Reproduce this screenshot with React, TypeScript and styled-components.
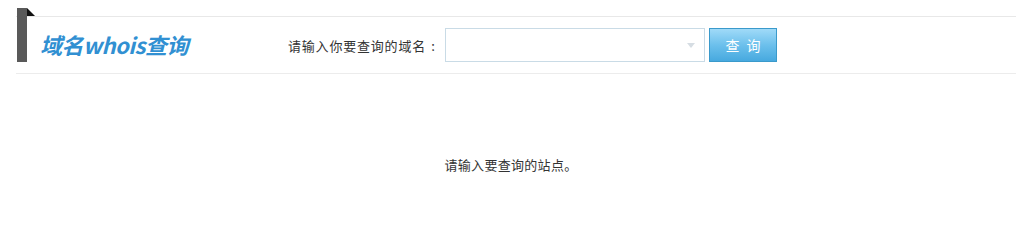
import styled, { createGlobalStyle } from "styled-components";

const GlobalStyle = createGlobalStyle`
  body {
    margin: 0;
    background: #fff;
    font-family: "Noto Sans CJK SC", "Noto Sans", "Liberation Sans", sans-serif;
    color: #333;
  }
`;

const Page = styled.div`
  padding-top: 16px;
`;

const Header = styled.div`
  margin: 0 6px 0 16px;
  height: 56px;
  border-top: 1px solid #e8e8e8;
  border-bottom: 1px solid #ececec;
  display: flex;
  align-items: center;
`;

const Ribbon = styled.div`
  position: relative;
  align-self: flex-start;
  margin-top: -9px;
  margin-left: 1px;
  width: 10px;
  height: 54px;
  background: #595959;
  flex-shrink: 0;
  &::after {
    content: "";
    position: absolute;
    top: 0;
    right: -8px;
    width: 0;
    height: 0;
    border-top: 8px solid transparent;
    border-left: 8px solid #111;
  }
`;

const Title = styled.h1`
  margin: 0 0 0 13px;
  width: 248px;
  font-size: 22px;
  font-weight: 700;
  font-style: italic;
  color: #3190d2;
  letter-spacing: -0.5px;
  line-height: 1;
  padding-bottom: 2px;
`;

const Form = styled.form`
  display: flex;
  align-items: center;
`;

const Label = styled.label`
  font-size: 13px;
  letter-spacing: 0.8px;
  color: #333;
  margin-right: 5px;
  white-space: nowrap;
`;

const Colon = styled.span`
  display: inline-block;
  width: 13px;
  text-align: center;
  margin-left: 1px;
`;

const SelectBox = styled.div`
  position: relative;
  width: 260px;
  height: 34px;
  box-sizing: border-box;
  border: 1px solid #c9dbe6;
  background: #fff;
`;

const Arrow = styled.span`
  position: absolute;
  right: 9px;
  top: 14px;
  width: 0;
  height: 0;
  border-left: 4px solid transparent;
  border-right: 4px solid transparent;
  border-top: 5px solid #d6dde3;
`;

const SearchButton = styled.button`
  margin-left: 4px;
  width: 68px;
  height: 34px;
  box-sizing: border-box;
  border: 1px solid #3a9acb;
  background: linear-gradient(to bottom, #a0daf8 0%, #6cc0ec 50%, #47a9df 100%);
  color: #fff;
  font-family: inherit;
  font-size: 14px;
  letter-spacing: 7px;
  padding: 0 0 0 7px;
  cursor: pointer;
`;

const Message = styled.p`
  margin: 0;
  padding-top: 82px;
  text-align: center;
  font-size: 13px;
  letter-spacing: 0.3px;
  line-height: 18px;
  color: #333;
`;

export default function App() {
  return (
    <>
      <GlobalStyle />
      <Page>
        <Header>
          <Ribbon />
          <Title>域名whois查询</Title>
          <Form onSubmit={(e) => e.preventDefault()}>
            <Label>
              请输入你要查询的域名<Colon>:</Colon>
            </Label>
            <SelectBox>
              <Arrow />
            </SelectBox>
            <SearchButton type="submit">查询</SearchButton>
          </Form>
        </Header>
        <Message>请输入要查询的站点。</Message>
      </Page>
    </>
  );
}
